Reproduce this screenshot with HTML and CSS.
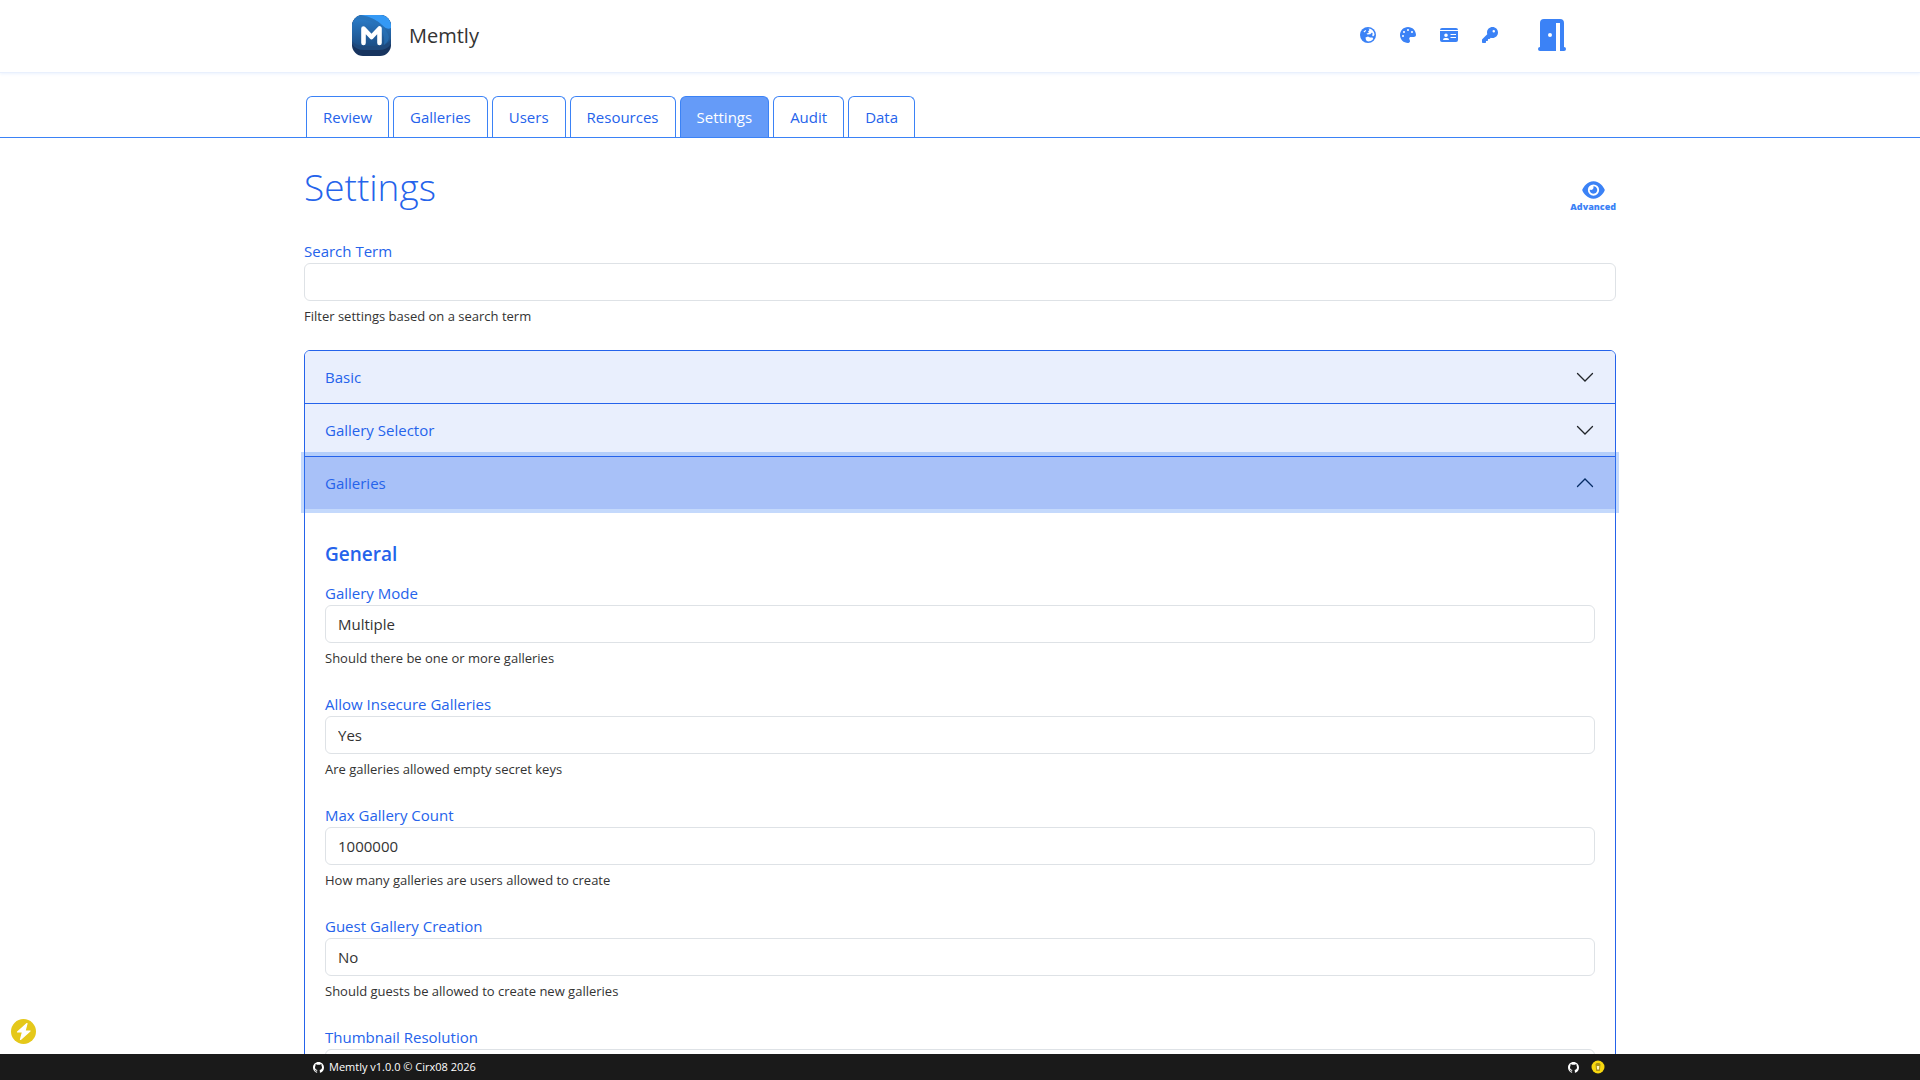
FILE: index.html
```html
<!DOCTYPE html>
<html lang="en">
<head>
<meta charset="utf-8">
<meta name="viewport" content="width=device-width, initial-scale=1">
<title>Memtly - Settings</title>
<link rel="stylesheet" href="styles.css">
</head>
<body>
<header class="topbar">
  <div class="topbar-inner">
    <a class="brand" href="#">
      <svg class="brand-logo" viewBox="0 0 39 41" aria-hidden="true">
        <defs>
          <linearGradient id="logo-face" x1="0" y1="0" x2="0" y2="1">
            <stop offset="0" stop-color="#2b80cf"/><stop offset="1" stop-color="#1d4f86"/>
          </linearGradient>
          <clipPath id="logo-clip"><rect width="39" height="41" rx="11"/></clipPath>
        </defs>
        <g clip-path="url(#logo-clip)">
          <rect width="39" height="41" fill="#17345f"/>
          <path d="M0 0h39v29q-4 6-12 6H12Q4 35 0 29z" fill="#1f4a7d"/>
          <path d="M0 0h39v24q-4 7-12 7H12Q4 31 0 26z" fill="url(#logo-face)"/>
          <path d="M9 0h30v13q-4 2-8-2Q24 3 9 0z" fill="#3499f5"/>
          <path d="M9 0q15 3 22 11l5 8q3 6-4 11Q34 14 20 7 10 3 2 5z" fill="#2872b8" opacity=".7"/>
        </g>
        <path d="M11.500 28V13.500L19.500 22l8-8.500V28" fill="none" stroke="#fff" stroke-width="4.600" stroke-linecap="round" stroke-linejoin="round"/>
      </svg>
      <span class="brand-name">Memtly</span>
    </a>
    <nav class="tools" aria-label="Account">
      <button class="tool" type="button" aria-label="Language">
        <svg viewBox="0 0 16 16" width="16" height="16"><circle cx="8" cy="8" r="8" fill="currentColor"/><path d="M8.500 1.500C12 1.700 14.500 4.500 14.500 8l-1.500 1.500-1-1.500.8-1-.8-1.500-1.800 1.700-2.700.3-1-.8 2.500-1.200L8 4.500 9.500 3zM3.500 4.500L5.500 3l.7.8L4.300 5.500zM5.500 10.500L8 9.500l2 1h2.500l.8 1.500C12 13.700 10 14.500 8 14.500l-2-1.300z" fill="#fff"/></svg>
      </button>
      <button class="tool" type="button" aria-label="Theme">
        <svg viewBox="0 0 512 512" width="16" height="16"><path fill="currentColor" d="M512 256c0 .9 0 1.800 0 2.700c-.4 36.500-33.600 61.300-70.100 61.300L344 320c-26.500 0-48 21.500-48 48c0 3.400 .4 6.700 1 9.900c2.100 10.200 6.500 20 10.800 29.900c6.100 13.800 12.100 27.500 12.100 42c0 31.800-21.600 60.700-53.400 62c-3.500 .1-7 .2-10.600 .2C114.600 512 0 397.400 0 256S114.600 0 256 0S512 114.600 512 256zM128 288a32 32 0 1 0 -64 0 32 32 0 1 0 64 0zm0-96a32 32 0 1 0 0-64 32 32 0 1 0 0 64zM288 96a32 32 0 1 0 -64 0 32 32 0 1 0 64 0zm96 96a32 32 0 1 0 0-64 32 32 0 1 0 0 64z"/></svg>
      </button>
      <button class="tool" type="button" aria-label="Profile">
        <svg viewBox="0 0 18 16" width="18" height="16"><path fill="currentColor" fill-rule="evenodd" d="M2 1h14a2 2 0 0 1 2 2H0a2 2 0 0 1 2-2zM0 4h18v9a2 2 0 0 1-2 2H2a2 2 0 0 1-2-2zM3 13h6a2 2 0 0 0-2-2H5a2 2 0 0 0-2 2zM6 6.500a1.800 1.800 0 1 0 0 3.600 1.800 1.800 0 0 0 0-3.600zM10.500 7v1H16V7zM10.500 10v1H16v-1z"/></svg>
      </button>
      <button class="tool" type="button" aria-label="Change password">
        <svg viewBox="0 0 512 512" width="16" height="16"><path fill="currentColor" d="M336 352c97.200 0 176-78.800 176-176S433.200 0 336 0S160 78.800 160 176c0 18.700 2.900 36.800 8.300 53.700L7 391c-4.500 4.500-7 10.600-7 17l0 80c0 13.300 10.700 24 24 24l80 0c13.300 0 24-10.700 24-24l0-40 40 0c13.300 0 24-10.700 24-24l0-40 40 0c6.400 0 12.500-2.500 17-7l33.300-33.300c16.900 5.400 35 8.300 53.700 8.300zM376 96a40 40 0 1 1 0 80 40 40 0 1 1 0-80z"/></svg>
      </button>
      <button class="tool tool-exit" type="button" aria-label="Log out">
        <svg viewBox="0 0 28 32" width="28" height="32"><path fill="currentColor" fill-rule="evenodd" d="M6 0h16a4 4 0 0 1 4 4v24a2 2 0 0 1 0 4h-4V4h-4v28H2a2 2 0 0 1 0-4V4a4 4 0 0 1 4-4zM12 14a2 2 0 1 0 0 4 2 2 0 0 0 0-4z"/></svg>
      </button>
    </nav>
  </div>
</header>

<nav class="tabs" aria-label="Sections">
  <div class="tabs-inner">
    <a class="tab" href="#">Review</a>
    <a class="tab" href="#">Galleries</a>
    <a class="tab" href="#">Users</a>
    <a class="tab" href="#">Resources</a>
    <a class="tab tab-active" href="#" aria-current="page">Settings</a>
    <a class="tab" href="#">Audit</a>
    <a class="tab" href="#">Data</a>
  </div>
</nav>

<main class="page">
  <div class="page-head">
    <h1 class="page-title">Settings</h1>
    <button class="advanced" type="button">
      <svg viewBox="0 0 576 512" width="23" height="20" aria-hidden="true"><path fill="currentColor" d="M288 32c-80.800 0-145.500 36.800-192.600 80.600C48.600 156 17.300 208 2.500 243.700c-3.300 7.900-3.300 16.700 0 24.600C17.300 304 48.600 356 95.400 399.400C142.500 443.200 207.200 480 288 480s145.500-36.800 192.600-80.600c46.800-43.500 78.100-95.400 93-131.100c3.300-7.900 3.300-16.700 0-24.600c-14.900-35.700-46.200-87.700-93-131.100C433.500 68.800 368.800 32 288 32zM144 256a144 144 0 1 1 288 0 144 144 0 1 1 -288 0zm144-64c0 35.300-28.700 64-64 64c-7.100 0-13.900-1.200-20.300-3.300c-5.500-1.800-11.900 1.600-11.700 7.400c.3 6.900 1.300 13.800 3.200 20.700c13.700 51.200 66.400 81.600 117.600 67.900s81.600-66.400 67.900-117.600c-11.100-41.500-47.800-69.400-88.600-71.100c-5.800-.2-9.200 6.100-7.400 11.700c2.100 6.400 3.300 13.200 3.300 20.300z"/></svg>
      <span>Advanced</span>
    </button>
  </div>

  <div class="field">
    <label class="label" for="search">Search Term</label>
    <input class="control" id="search" type="text">
    <div class="hint">Filter settings based on a search term</div>
  </div>

  <div class="accordion">
    <button class="accordion-button" type="button" aria-expanded="false">
      <span>Basic</span>
      <svg class="chevron" viewBox="0 0 20 20" aria-hidden="true"><path d="M2.500 6.500L10 14 17.500 6.500"/></svg>
    </button>
    <button class="accordion-button" type="button" aria-expanded="false">
      <span>Gallery Selector</span>
      <svg class="chevron" viewBox="0 0 20 20" aria-hidden="true"><path d="M2.500 6.500L10 14 17.500 6.500"/></svg>
    </button>
    <button class="accordion-button accordion-open" type="button" aria-expanded="true">
      <span>Galleries</span>
      <svg class="chevron" viewBox="0 0 20 20" aria-hidden="true"><path d="M2.500 13.500L10 6 17.500 13.500"/></svg>
    </button>
    <section class="accordion-body">
      <h2 class="group-title">General</h2>
      <div class="field">
        <label class="label" for="mode">Gallery Mode</label>
        <select class="control" id="mode"><option>Multiple</option><option>Single</option></select>
        <div class="hint">Should there be one or more galleries</div>
      </div>
      <div class="field">
        <label class="label" for="insecure">Allow Insecure Galleries</label>
        <select class="control" id="insecure"><option>Yes</option><option>No</option></select>
        <div class="hint">Are galleries allowed empty secret keys</div>
      </div>
      <div class="field">
        <label class="label" for="count">Max Gallery Count</label>
        <input class="control" id="count" type="text" inputmode="numeric" value="1000000">
        <div class="hint">How many galleries are users allowed to create</div>
      </div>
      <div class="field">
        <label class="label" for="guest">Guest Gallery Creation</label>
        <select class="control" id="guest"><option>No</option><option>Yes</option></select>
        <div class="hint">Should guests be allowed to create new galleries</div>
      </div>
      <div class="field">
        <label class="label" for="thumb">Thumbnail Resolution</label>
        <input class="control" id="thumb" type="text">
      </div>
    </section>
  </div>
</main>

<button class="bolt" type="button" aria-label="Quick actions">
  <svg viewBox="0 0 25 25" width="25" height="25"><circle cx="12.500" cy="12.500" r="12.500" fill="#e5c81a"/><path d="M16 4.500L6.500 13h5L9.500 20.500 19 12h-5z" fill="#fff" stroke="#fff" stroke-width="1.200" stroke-linejoin="round"/></svg>
</button>

<footer class="footer">
  <div class="footer-inner">
    <a class="footer-link" href="#">
      <svg class="octo" viewBox="0 0 16 16" aria-hidden="true"><path fill="currentColor" d="M8 0C3.580 0 0 3.580 0 8c0 3.540 2.290 6.530 5.470 7.590.4.070.55-.17.55-.38 0-.19-.01-.82-.01-1.490-2.010.37-2.530-.49-2.690-.94-.09-.23-.48-.94-.82-1.130-.28-.15-.68-.52-.01-.53.63-.01 1.080.58 1.230.82.72 1.210 1.870.87 2.330.66.070-.52.28-.87.51-1.070-1.780-.2-3.640-.89-3.640-3.950 0-.87.31-1.590.82-2.150-.08-.2-.36-1.020.08-2.120 0 0 .67-.21 2.200.82.64-.18 1.320-.27 2-.27s1.360.09 2 .27c1.530-1.040 2.200-.82 2.200-.82.44 1.100.16 1.920.08 2.120.51.56.82 1.270.82 2.150 0 3.070-1.870 3.750-3.650 3.950.29.25.54.73.54 1.480 0 1.070-.01 1.930-.01 2.200 0 .21.15.46.55.38A8.010 8.010 0 0 0 16 8c0-4.420-3.580-8-8-8z"/></svg>
      <span>Memtly v1.0.0 © Cirx08 2026</span>
    </a>
    <div class="footer-icons">
      <a class="footer-link" href="#" aria-label="GitHub">
        <svg class="octo" viewBox="0 0 16 16"><path fill="currentColor" d="M8 0C3.580 0 0 3.580 0 8c0 3.540 2.290 6.530 5.470 7.590.4.070.55-.17.55-.38 0-.19-.01-.82-.01-1.490-2.010.37-2.530-.49-2.690-.94-.09-.23-.48-.94-.82-1.130-.28-.15-.68-.52-.01-.53.63-.01 1.080.58 1.230.82.72 1.210 1.870.87 2.330.66.070-.52.28-.87.51-1.070-1.780-.2-3.640-.89-3.640-3.950 0-.87.31-1.590.82-2.150-.08-.2-.36-1.020.08-2.120 0 0 .67-.21 2.200.82.64-.18 1.320-.27 2-.27s1.360.09 2 .27c1.530-1.040 2.200-.82 2.200-.82.44 1.100.16 1.920.08 2.120.51.56.82 1.270.82 2.150 0 3.070-1.870 3.750-3.650 3.950.29.25.54.73.54 1.480 0 1.070-.01 1.930-.01 2.200 0 .21.15.46.55.38A8.010 8.010 0 0 0 16 8c0-4.420-3.580-8-8-8z"/></svg>
      </a>
      <a class="footer-link" href="#" aria-label="Buy me a coffee">
        <svg viewBox="0 0 14 14" width="14" height="14"><circle cx="7" cy="7" r="6.500" fill="#f7d70f"/><path d="M4.500 4.500L5.500 3h3l1 1.500L8.800 11H5.200z" fill="#ac9518"/><path d="M5.800 6h2.500l-.3 3.500H6.100z" fill="#fff6c0"/></svg>
      </a>
    </div>
  </div>
</footer>
</body>
</html>
```
FILE: styles.css
```css
:root {
  --blue: #3b82f6;
  --blue-deep: #2563eb;
  --ink: #333;
  --line: #dee2e6;
}

*,
*::before,
*::after {
  box-sizing: border-box;
}

html {
  scrollbar-width: none;
}

body {
  margin: 0;
  padding-bottom: 26px;
  background: #fff;
  color: var(--ink);
  font-family: "Segoe UI", "Open Sans", "Noto Sans", sans-serif;
  font-size: 15px;
  line-height: 24px;
}

button {
  margin: 0;
  padding: 0;
  border: 0;
  background: none;
  color: inherit;
  font: inherit;
  cursor: pointer;
}

a {
  color: inherit;
  text-decoration: none;
}

svg {
  display: block;
  flex: none;
}

.topbar {
  border-bottom: 1px solid #e9f0fd;
  box-shadow: 0 1px 3px rgba(59, 130, 246, 0.1);
}

.topbar-inner {
  display: flex;
  align-items: center;
  justify-content: space-between;
  max-width: 1216px;
  height: 72px;
  margin: 0 auto;
  padding: 0 2px 2px 0;
}

.brand {
  display: flex;
  align-items: center;
  gap: 18px;
  font-size: 20px;
}

.brand-logo {
  width: 39px;
  height: 41px;
}

.brand-name {
  padding-top: 2px;
}

.tools {
  display: flex;
  align-items: center;
  gap: 24px;
  color: var(--blue);
}

.tool-exit {
  margin-left: 16px;
}

.tabs {
  padding-top: 23px;
  border-bottom: 1px solid var(--blue);
}

.tabs-inner {
  display: flex;
  gap: 4px;
  max-width: 1312px;
  margin: 0 auto;
  padding: 0 2px;
}

.tab {
  padding: 8px 16px;
  border: 1px solid var(--blue);
  border-bottom: 0;
  border-radius: 6px 6px 0 0;
  color: var(--blue-deep);
}

.tab-active {
  background: #659bf8;
  color: #fff;
}

.page {
  max-width: 1312px;
  margin: 0 auto;
  padding-top: 25px;
}

.page-head {
  display: flex;
  align-items: flex-start;
  justify-content: space-between;
  margin-bottom: 26px;
}

.page-title {
  margin: 0;
  color: var(--blue-deep);
  font-size: 37px;
  font-weight: 300;
  line-height: 48px;
}

.advanced {
  display: flex;
  flex-direction: column;
  align-items: center;
  gap: 1px;
  padding-top: 17px;
  color: var(--blue);
  font-size: 9px;
  font-weight: 800;
  line-height: 12px;
}

.field {
  margin-bottom: 23px;
}

.label {
  display: block;
  color: var(--blue-deep);
}

.control {
  display: block;
  width: 100%;
  height: 38px;
  margin: 0;
  padding: 6px 12px;
  appearance: none;
  border: 1px solid var(--line);
  border-radius: 6px;
  background: #fff;
  color: var(--ink);
  font: inherit;
}

.hint {
  margin-top: 5px;
  font-size: 13px;
  line-height: 21px;
}

.accordion {
  border: 1px solid var(--blue-deep);
  border-radius: 6px;
}

.accordion-button {
  display: flex;
  align-items: center;
  justify-content: space-between;
  width: 100%;
  height: 52px;
  padding: 0 20px;
  background: #e9effd;
  color: var(--blue-deep);
  text-align: left;
}

.accordion-button:first-child {
  border-radius: 5px 5px 0 0;
}

.accordion-button + .accordion-button {
  height: 53px;
  border-top: 1px solid var(--blue-deep);
}

.accordion-open {
  background: #a8c1f8;
  box-shadow: 0 0 0 4px rgba(59, 130, 246, 0.3);
}

.chevron {
  width: 20px;
  height: 20px;
  fill: none;
  stroke: #212529;
  stroke-width: 1.3;
  stroke-linecap: round;
}

.accordion-open .chevron {
  stroke: #052c65;
}

.accordion-body {
  padding: 33px 20px 16px;
}

.group-title {
  margin: 0 0 15px;
  color: var(--blue-deep);
  font-size: 19px;
  font-weight: 600;
  line-height: 24px;
}

.bolt {
  position: fixed;
  bottom: 36px;
  left: 11px;
}

.footer {
  position: fixed;
  right: 0;
  bottom: 0;
  left: 0;
  background: #1a1a1a;
  color: #fff;
  font-size: 11px;
  font-weight: 500;
  line-height: 26px;
}

.footer-inner,
.footer-icons,
.footer-link {
  display: flex;
  align-items: center;
}

.footer-inner {
  justify-content: space-between;
  max-width: 1312px;
  height: 26px;
  margin: 0 auto;
  padding: 0 11px 0 9px;
}

.footer-link {
  gap: 5px;
}

.footer-icons {
  gap: 12px;
}

.octo {
  width: 11px;
  height: 11px;
}
```
